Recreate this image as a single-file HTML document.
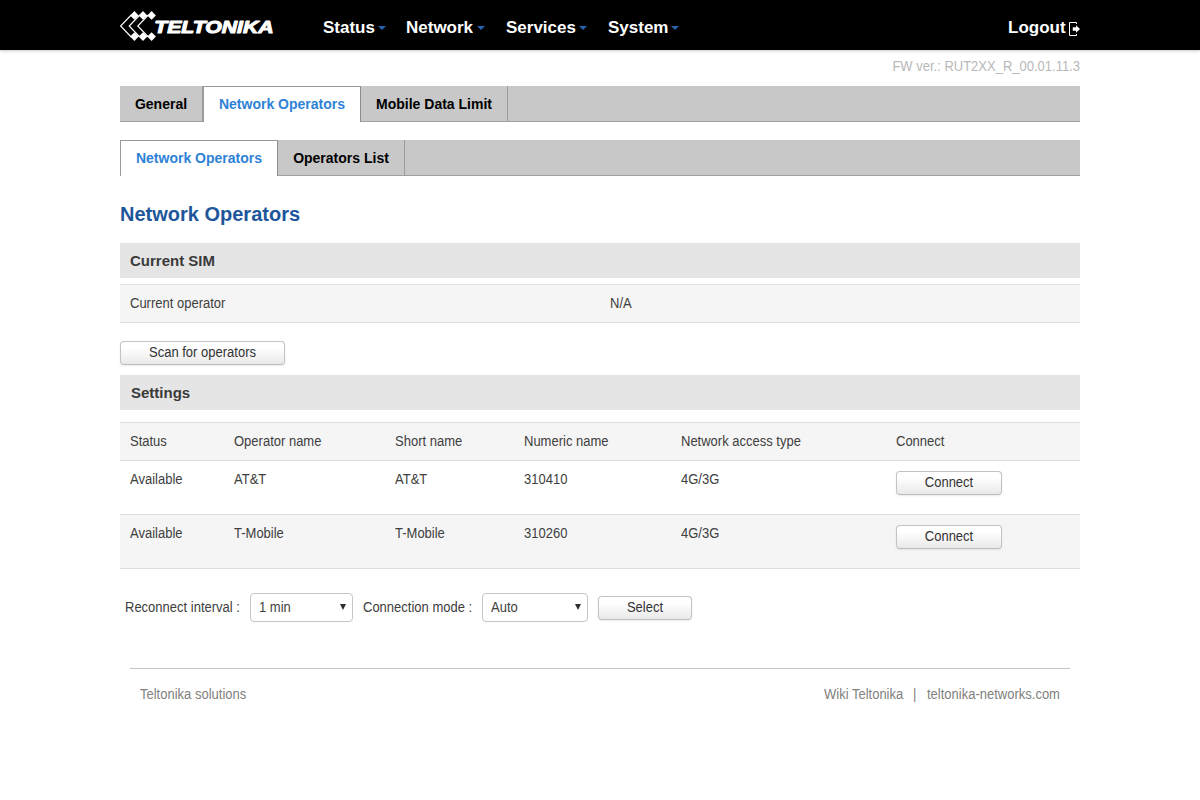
<!DOCTYPE html>
<html>
<head>
<meta charset="utf-8">
<title>Network Operators</title>
<style>
*{box-sizing:border-box;margin:0;padding:0}
html,body{width:1200px;height:800px;background:#fff;overflow:hidden}
body{font-family:"Liberation Sans",sans-serif;font-size:14px;color:#404040;position:relative}
.abs{position:absolute;white-space:nowrap}
#hdr{left:0;top:0;width:1200px;height:50px;background:#000;box-shadow:0 1px 3px rgba(0,0,0,.22)}
.nav{color:#fff;font-weight:bold;font-size:17px;line-height:20px;top:18px}
.caret{width:0;height:0;border-left:4px solid transparent;border-right:4px solid transparent;border-top:4px solid #2862ae;top:26px}
#logo-t{left:155px;top:15px;color:#fff;font-weight:bold;font-style:italic;font-size:19px;line-height:22px;letter-spacing:0.5px}
#fw{right:120px;top:58px;font-size:13px;line-height:16px;color:#b8b8b8;transform:scaleY(1.075);transform-origin:0 3px}
.tabbar{left:120px;width:960px;height:36px;background:#c8c8c8;border-bottom:1px solid #a0a0a0}
.tab{top:0;height:35px;line-height:37px;font-weight:bold;font-size:14px;color:#000;border-right:1px solid #9c9c9c;text-align:center}
.tab.act{background:#fff;color:#2e82d6;height:36px;border-top:1px solid #999;border-left:1px solid #999;border-right:1px solid #8e8e8e;line-height:35px}
#title{left:120px;top:202px;font-size:20px;line-height:24px;font-weight:bold;color:#1d569b}
.band{left:120px;width:960px;height:35px;background:#e5e5e5}
.bt{font-weight:bold;font-size:15px;line-height:18px;color:#3a3a3a;transform:scaleY(1.035);transform-origin:0 14px}
.row{left:120px;width:960px;background:#f5f5f5;border-top:1px solid #dedede}
.t{font-size:13px;line-height:16px;color:#404040;transform:scaleY(1.075);transform-origin:0 3px}
.c{text-align:center;color:#333}
.btn{border:1px solid #c3c3c3;border-bottom-color:#bdbdbd;border-radius:4px;background:linear-gradient(#fff 0%,#fff 25%,#e9e9e9 100%);box-shadow:0 1px 2px rgba(0,0,0,.08),0 0 1px rgba(0,0,0,.05);height:24px}
.sel{border:1px solid #c6c6c6;border-radius:4px;background:#fff;height:29px;line-height:26px;font-size:13px;color:#404040;padding-left:8px}
.sel:after{content:"";position:absolute;right:6px;top:10px;border-left:3px solid transparent;border-right:3px solid transparent;border-top:6px solid #2e2e2e}
#foot-line{left:130px;top:668px;width:940px;height:1px;background:#c6c6c6}
.ft{font-size:13px;line-height:16px;color:#808080;top:686px;transform:scaleY(1.075);transform-origin:0 3px}
</style>
</head>
<body>
<div id="hdr" class="abs"></div>
<svg class="abs" style="left:110px;top:0px" width="180" height="50" viewBox="110 0 180 50">
 <g fill="none" stroke="#fff" stroke-width="1.15">
  <path d="M131.2 15 L120.6 26 L131.2 37"/>
  <path d="M139.8 15 L129.2 26 L139.8 37"/>
  <path d="M148.4 15 L137.8 26 L148.4 37"/>
 </g>
 <g fill="#fff">
  <path d="M134.4 11.1 L138.7 15.4 L134.4 19.7 L130.1 15.4z"/>
  <path d="M134.4 32.3 L138.7 36.6 L134.4 40.9 L130.1 36.6z"/>
  <path d="M143.0 11.1 L147.3 15.4 L143.0 19.7 L138.7 15.4z"/>
  <path d="M143.0 32.3 L147.3 36.6 L143.0 40.9 L138.7 36.6z"/>
  <path d="M151.6 11.1 L155.9 15.4 L151.6 19.7 L147.3 15.4z"/>
  <path d="M151.6 32.3 L155.9 36.6 L151.6 40.9 L147.3 36.6z"/>
 </g>
 <text x="154.2" y="33.2" font-family="Liberation Sans, sans-serif" font-weight="bold" font-style="italic" font-size="17.2" fill="#fff" stroke="#fff" stroke-width="1.05" stroke-linejoin="round" textLength="119.5" lengthAdjust="spacingAndGlyphs">TELTONIKA</text>
</svg>

<div class="abs nav" style="left:323px">Status</div><div class="abs caret" style="left:378px"></div>
<div class="abs nav" style="left:406px">Network</div><div class="abs caret" style="left:477px"></div>
<div class="abs nav" style="left:506px">Services</div><div class="abs caret" style="left:579px"></div>
<div class="abs nav" style="left:608px">System</div><div class="abs caret" style="left:671px"></div>
<div class="abs nav" style="left:1008px">Logout</div>
<svg class="abs" style="left:1068px;top:21px" width="14" height="16" viewBox="0 0 14 16">
 <path d="M8.5 3 V1.5 H1.5 V14.5 H8.5 V13" fill="none" stroke="#fff" stroke-width="1"/>
 <path d="M4.75 6.2 H8 V4.3 L12 8 L8 11.7 V9.8 H4.75z" fill="#fff"/>
</svg>

<div id="fw" class="abs">FW ver.: RUT2XX_R_00.01.11.3</div>

<div class="abs tabbar" style="top:86px">
 <div class="abs tab" style="left:0;width:83px">General</div>
 <div class="abs tab act" style="left:83px;width:158px">Network Operators</div>
 <div class="abs tab" style="left:241px;width:147px">Mobile Data Limit</div>
</div>
<div class="abs tabbar" style="top:140px">
 <div class="abs tab act" style="left:0;width:158px">Network Operators</div>
 <div class="abs tab" style="left:158px;width:127px">Operators List</div>
</div>

<div id="title" class="abs">Network Operators</div>

<div class="abs band" style="top:243px"></div>
<div class="abs bt" style="left:130px;top:252px">Current SIM</div>
<div class="abs row" style="top:284px;height:39px;border-bottom:1px solid #dedede"></div>
<div class="abs t" style="left:130px;top:295px">Current operator</div>
<div class="abs t" style="left:610px;top:295px">N/A</div>

<div class="abs btn" style="left:120px;top:341px;width:165px"></div>
<div class="abs t c" style="left:120px;top:344px;width:165px">Scan for operators</div>

<div class="abs band" style="top:375px"></div>
<div class="abs bt" style="left:131px;top:384px">Settings</div>

<div class="abs row" style="top:422px;height:38px"></div>
<div class="abs" style="left:120px;top:460px;width:960px;height:1px;background:#dedede"></div>
<div class="abs row" style="top:514px;height:55px;border-bottom:1px solid #dedede"></div>

<div class="abs t" style="left:130px;top:433px">Status</div>
<div class="abs t" style="left:234px;top:433px">Operator name</div>
<div class="abs t" style="left:395px;top:433px">Short name</div>
<div class="abs t" style="left:524px;top:433px">Numeric name</div>
<div class="abs t" style="left:681px;top:433px">Network access type</div>
<div class="abs t" style="left:896px;top:433px">Connect</div>

<div class="abs t" style="left:130px;top:471px">Available</div>
<div class="abs t" style="left:234px;top:471px">AT&amp;T</div>
<div class="abs t" style="left:395px;top:471px">AT&amp;T</div>
<div class="abs t" style="left:524px;top:471px">310410</div>
<div class="abs t" style="left:681px;top:471px">4G/3G</div>
<div class="abs btn" style="left:896px;top:471px;width:106px"></div>
<div class="abs t c" style="left:896px;top:474px;width:106px">Connect</div>

<div class="abs t" style="left:130px;top:525px">Available</div>
<div class="abs t" style="left:234px;top:525px">T-Mobile</div>
<div class="abs t" style="left:395px;top:525px">T-Mobile</div>
<div class="abs t" style="left:524px;top:525px">310260</div>
<div class="abs t" style="left:681px;top:525px">4G/3G</div>
<div class="abs btn" style="left:896px;top:525px;width:106px"></div>
<div class="abs t c" style="left:896px;top:528px;width:106px">Connect</div>

<div class="abs t" style="left:125px;top:599px">Reconnect interval :</div>
<div class="abs sel" style="left:250px;top:593px;width:103px"></div>
<div class="abs t" style="left:259px;top:599px">1 min</div>
<div class="abs t" style="left:363px;top:599px">Connection mode :</div>
<div class="abs sel" style="left:482px;top:593px;width:106px"></div>
<div class="abs t" style="left:491px;top:599px">Auto</div>
<div class="abs btn" style="left:598px;top:596px;width:94px"></div>
<div class="abs t c" style="left:598px;top:599px;width:94px">Select</div>

<div id="foot-line" class="abs"></div>
<div class="abs ft" style="left:140px">Teltonika solutions</div>
<div class="abs ft" style="left:824px">Wiki Teltonika</div>
<div class="abs ft" style="left:913px">|</div>
<div class="abs ft" style="left:927px">teltonika-networks.com</div>
</body>
</html>
